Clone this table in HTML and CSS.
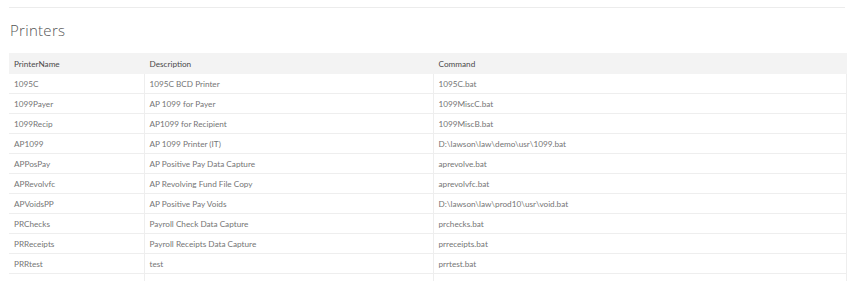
FILE: index.html
```html
<!DOCTYPE html>
<html>
<head>
<meta charset="utf-8">
<link rel="stylesheet" href="styles.css">
</head>
<body>
<div class="page">
  <div class="rule"></div>
  <h2 class="title">Printers</h2>
  <table class="grid">
    <colgroup><col class="c1"><col class="c2"><col class="c3"></colgroup>
    <thead>
      <tr><th>PrinterName</th><th>Description</th><th>Command</th></tr>
    </thead>
    <tbody>
      <tr><td>1095C</td><td>1095C BCD Printer</td><td>1095C.bat</td></tr>
      <tr><td>1099Payer</td><td>AP 1099 for Payer</td><td>1099MiscC.bat</td></tr>
      <tr><td>1099Recip</td><td>AP1099 for Recipient</td><td>1099MiscB.bat</td></tr>
      <tr><td>AP1099</td><td>AP 1099 Printer (IT)</td><td>D:\lawson\law\demo\usr\1099.bat</td></tr>
      <tr><td>APPosPay</td><td>AP Positive Pay Data Capture</td><td>aprevolve.bat</td></tr>
      <tr><td>APRevolvfc</td><td>AP Revolving Fund File Copy</td><td>aprevolvfc.bat</td></tr>
      <tr><td>APVoidsPP</td><td>AP Positive Pay Voids</td><td>D:\lawson\law\prod10\usr\void.bat</td></tr>
      <tr><td>PRChecks</td><td>Payroll Check Data Capture</td><td>prchecks.bat</td></tr>
      <tr><td>PRReceipts</td><td>Payroll Receipts Data Capture</td><td>prreceipts.bat</td></tr>
      <tr><td>PRRtest</td><td>test</td><td>prrtest.bat</td></tr>
      <tr><td>&nbsp;</td><td>&nbsp;</td><td>&nbsp;</td></tr>
    </tbody>
  </table>
</div>
</body>
</html>
```
FILE: styles.css
```css
html, body {
  margin: 0;
  padding: 0;
  background: #fff;
  overflow: hidden;
}
.page {
  padding: 7px 4px 0 9px;
  font-family: Lato, "Noto Sans", sans-serif;
}
.rule {
  height: 1px;
  background: #ececec;
  margin-right: 1px;
}
.title {
  margin: 11px 0 0 1px;
  font-family: "Open Sans", Lato, sans-serif;
  font-size: 15px;
  line-height: 22px;
  font-weight: 300;
  color: #555555;
  letter-spacing: 0.3px;
  height: 34px;
}
.grid {
  width: 837px;
  border-collapse: collapse;
  table-layout: fixed;
  font-size: 8.2px;
  color: #757575;
}
.c1 { width: 135px; }
.c2 { width: 289px; }
.c3 { width: 413px; }
.grid th {
  background: #f3f3f3;
  color: #4a4a4a;
  font-weight: 400;
  text-align: left;
  height: 21px;
  padding: 0 5px;
  border-right: 1px solid #f3f3f3;
}
.grid td {
  height: 19px;
  padding: 0 5px;
  border-bottom: 1px solid #eeeeee;
  border-left: 1px solid #eeeeee;
  border-right: 1px solid #eeeeee;
  white-space: nowrap;
}
.grid td:first-child { border-left: none; }
```
